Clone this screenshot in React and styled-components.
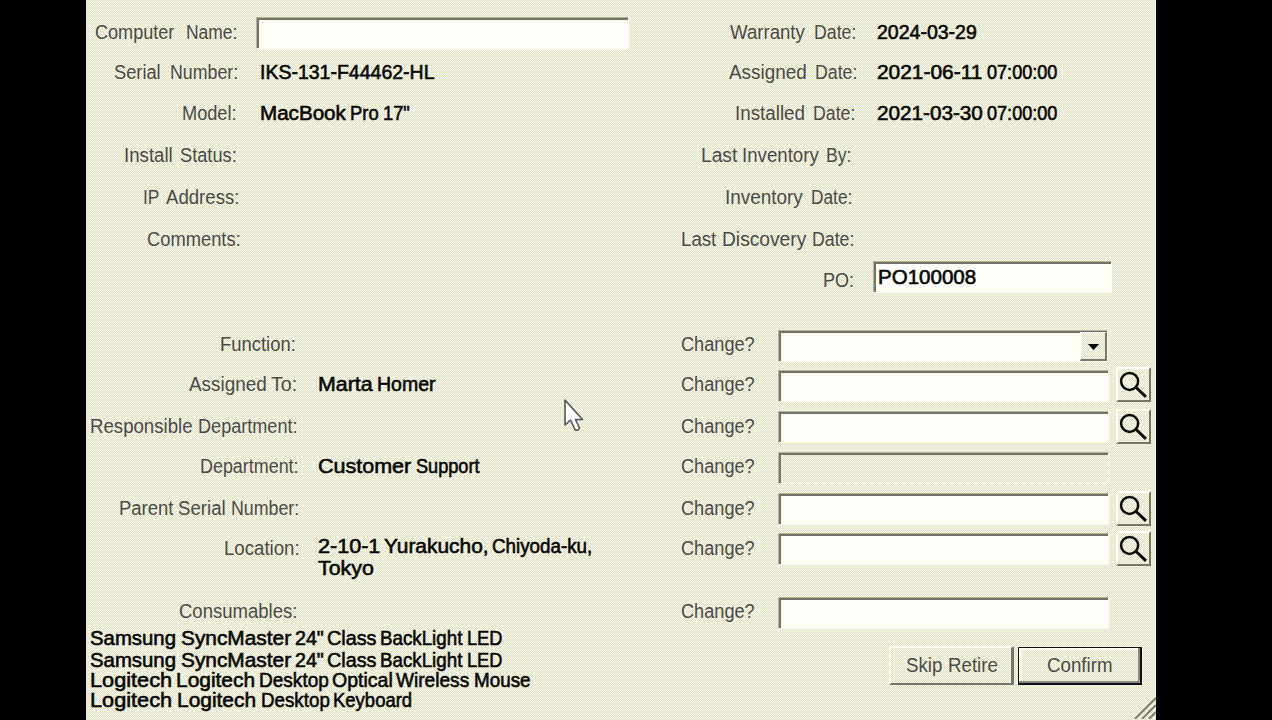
import React, { useLayoutEffect, useRef, useState } from 'react';
import styled, { createGlobalStyle, css } from 'styled-components';

const Global = createGlobalStyle`
  html, body { margin: 0; background: #000; }
  *, *::before, *::after { box-sizing: border-box; }
`;

const dither = css`
  background-color: #f2f2dc;
  background-image:
    conic-gradient(at 1px 1px, transparent 75%, #fff 0),
    conic-gradient(at 1px 1px, transparent 75%, #fff 0),
    conic-gradient(#ffff9c 25%, #dadafc 0 50%, #ffff9c 0 75%, #dadafc 0);
  background-size: 4px 4px, 4px 4px, 2px 2px;
  background-position: 1px 1px, 2px 2px, 1px 0;
  background-attachment: fixed;
`;

const whiteDither = css`
  background-color: #fefefe;
  background-image: conic-gradient(at 1px 1px, transparent 75%, #ffff9c 0);
  background-size: 4px 4px;
  background-position: 3px 1px;
  background-attachment: fixed;
`;

const Screen = styled.div`
  width: 1272px;
  height: 720px;
  padding: 0 116px 0 86px;
  background: #000;
  overflow: hidden;
`;

const Dialog = styled.main`
  ${dither}
  position: relative;
  width: 1070px;
  height: 720px;
  padding-top: 17px;
  overflow: hidden;
  display: flex;
  flex-direction: column;
  font: 20px/20px "Liberation Sans", Arial, sans-serif;
  color: #4a4a48;
`;

const Line = styled.div`
  display: flex;
  flex: none;
  height: ${(p) => p.$h || 20}px;
  white-space: nowrap;
  color: ${(p) => (p.$strong ? '#080808' : 'inherit')};
  -webkit-text-stroke: ${(p) => (p.$strong ? '0.6px #080808' : '0')};
`;

const WordBox = styled.span`
  display: block;
  flex: none;
  width: ${(p) => p.$w + 2}px;
  margin-left: ${(p) => p.$gap - 2}px;
`;

const Glyphs = styled.span`
  display: inline-block;
  transform-origin: 0 50%;
`;

function Word({ text, width, gap }) {
  const ref = useRef(null);
  const [scale, setScale] = useState(1);
  useLayoutEffect(() => {
    setScale((width + 1.5) / ref.current.offsetWidth);
  }, [text, width]);
  return (
    <WordBox $w={width} $gap={gap}>
      <Glyphs ref={ref} style={{ transform: `scaleX(${scale})` }}>{text}</Glyphs>
    </WordBox>
  );
}

// Each word is [text, width, gap before it].
function Text({ words, strong, h }) {
  return (
    <Line $strong={strong} $h={h}>
      {words.map(([text, width, gap], i) => (
        <Word key={i} text={text} width={width} gap={i === 0 ? 1 : gap} />
      ))}
    </Line>
  );
}

const Summary = styled.section`
  display: grid;
  grid-template-columns: 584px 1fr;
  height: 313px;
  flex: none;
`;

const Column = styled.div`
  display: flex;
  flex-direction: column;
`;

const Row = styled.div`
  display: flex;
  align-items: flex-start;
  flex: none;
  height: ${(p) => p.$h}px;
`;

const Label = styled.div`
  display: flex;
  justify-content: flex-end;
  flex: none;
  width: ${(p) => p.$w}px;
  padding: ${(p) => p.$top ?? 5}px ${(p) => p.$inset || 0}px 0 0;
`;

const Value = styled.div`
  flex: none;
  width: ${(p) => (p.$w ? `${p.$w}px` : 'auto')};
  padding: ${(p) => p.$top ?? 5}px 0 0 ${(p) => p.$left || 0}px;
`;

const Field = styled.div`
  ${(p) => (p.$disabled ? '' : whiteDither)}
  flex: none;
  display: flex;
  justify-content: flex-end;
  width: ${(p) => p.$w}px;
  height: 32px;
  margin-left: ${(p) => p.$left || 0}px;
  margin-top: ${(p) => p.$top || 0}px;
  padding: 2px 0 0 2px;
  border: 1px solid;
  border-color: #b4b49a #fbfbe9 #fbfbe9 #b4b49a;
  box-shadow: inset 2px 2px 0 #73736a;
`;

const FieldText = styled.div`
  flex: 1;
  padding: 3px 0 0 3px;
`;

const DropButton = styled.button`
  ${dither}
  width: 27px;
  height: 29px;
  margin: -1px 0 0;
  padding: 2px 0 0;
  border: solid;
  border-width: 1px 2px 2px 1px;
  border-color: #fff #77776a #77776a #fff;
  display: grid;
  place-items: center;
`;

const Finder = styled.button`
  ${dither}
  flex: none;
  width: 35px;
  height: 35px;
  margin: ${(p) => p.$top}px 0 0 7px;
  padding: 0;
  border: solid;
  border-width: 2px;
  border-color: #fffff4 #777768 #777768 #fffff4;
`;

const FinderIcon = styled.svg`
  display: block;
`;

const Changes = styled.section`
  flex: none;
  height: 298px;
`;

const Footer = styled.footer`
  display: flex;
  align-items: flex-start;
  justify-content: space-between;
  padding: 0 14px 0 5px;
`;

const Buttons = styled.div`
  display: flex;
  gap: 4px;
  padding-top: 18px;
`;

const PushButton = styled.button`
  ${dither}
  display: flex;
  justify-content: center;
  align-items: flex-start;
  width: 125px;
  height: 39px;
  padding: 7px 0 0 2px;
  font: inherit;
  color: inherit;
  border: solid;
  border-width: 2px 3px 2px 2px;
  border-color: #fffff2 #777768 #777768 #fffff2;
  ${(p) => p.$primary && css`
    width: 124px;
    height: 38px;
    margin-top: 1px;
    padding: 7px 0 0 2px;
    border-width: 1px 2px 2px 1px;
    border-color: #111;
    box-shadow: inset -2px -2px 0 #85858a, inset 2px 2px 0 #fffff4;
  `}
`;

const Grip = styled.svg`
  position: absolute;
  right: 0;
  bottom: 1px;
`;

const Pointer = styled.svg`
  position: absolute;
  left: 477px;
  top: 398px;
`;

const leftInfo = [
  { h: 40, inset: 3, label: [['Computer', 78], ['Name:', 50, 13]], field: true },
  { h: 41, inset: 2, label: [['Serial', 45], ['Number:', 67, 11]], value: [['IKS-131-F44462-HL', 173]] },
  { h: 42, inset: 4, label: [['Model:', 53]], value: [['MacBook', 84], ['Pro', 27, 6], ['17"', 25, 6]] },
  { h: 42, inset: 4, label: [['Install', 47], ['Status:', 55, 9]] },
  { h: 42, inset: 1, label: [['IP', 15], ['Address:', 72, 8]] },
  { h: 42, inset: 0, label: [['Comments:', 92]] },
];

const rightInfo = [
  { h: 40, inset: 2, label: [['Warranty', 73], ['Date:', 41, 11]], value: [['2024-03-29', 98]] },
  { h: 41, inset: 1, label: [['Assigned', 76], ['Date:', 41, 10]], value: [['2021-06-11', 104], ['07:00:00', 69, 6]] },
  { h: 42, inset: 3, label: [['Installed', 69], ['Date:', 41, 9]], value: [['2021-03-30', 104], ['07:00:00', 69, 6]] },
  { h: 42, inset: 7, label: [['Last', 35], ['Inventory', 75, 6], ['By:', 24, 9]] },
  { h: 42, inset: 6, label: [['Inventory', 76], ['Date:', 40, 10]] },
  { h: 41, inset: 4, label: [['Last', 34], ['Discovery', 83, 7], ['Date:', 41, 7]] },
  { h: 42, inset: 5, label: [['PO:', 29]], field: [['PO100008', 97]] },
];

const changes = [
  { h: 40, top: 4, inset: 4, label: [['Function:', 74]], drop: true },
  { h: 41, top: 4, inset: 2, label: [['Assigned', 76], ['To:', 25, 6]], value: [[['Marta', 53], ['Homer', 57, 6]]], find: -3 },
  { h: 41, top: 5, inset: 2, label: [['Responsible', 101], ['Department:', 98, 7]], find: -2 },
  { h: 41, top: 4, inset: 1, label: [['Department:', 97]], value: [[['Customer', 92], ['Support', 62, 6]]], disabled: true },
  { h: 40, top: 5, inset: 0, label: [['Parent', 53], ['Serial', 46, 6], ['Number:', 67, 7]], find: -2 },
  {
    h: 64, top: 5, inset: 0, label: [['Location:', 74]], find: -2, valueTop: 3,
    value: [[['2-10-1', 61], ['Yurakucho,', 103, 5], ['Chiyoda-ku,', 99, 5]], [['Tokyo', 54]]],
  },
  { h: 31, top: 4, inset: 2, label: [['Consumables:', 117]] },
];

const samsung = [['Samsung', 85], ['SyncMaster', 109, 6], ['24"', 27, 5], ['Class', 48, 5], ['BackLight', 81, 5], ['LED', 34, 6]];
const consumables = [
  { h: 22, words: samsung },
  { h: 20, words: samsung },
  { h: 20, words: [['Logitech', 81], ['Logitech', 78, 5], ['Desktop', 68, 5], ['Optical', 59, 5], ['Wireless', 72, 5], ['Mouse', 55, 6]] },
  { h: 20, words: [['Logitech', 81], ['Logitech', 78, 6], ['Desktop', 67, 6], ['Keyboard', 78, 5]] },
];

function SearchIcon() {
  return (
    <FinderIcon width="31" height="31" viewBox="0 0 31 31" fill="none" stroke="#0b0b0b">
      <circle cx="11.6" cy="12.4" r="8.5" strokeWidth="2.5" />
      <path d="M17.6 18 L28 27.8" strokeWidth="3" />
    </FinderIcon>
  );
}

export default function App() {
  return (
    <Screen>
      <Global />
      <Dialog>
        <Summary>
          <Column>
            {leftInfo.map((r, i) => (
              <Row key={i} $h={r.h}>
                <Label $w={155} $inset={r.inset}><Text words={r.label} /></Label>
                {r.field && <Field $w={373} $left={15} />}
                {r.value && <Value $left={20}><Text strong words={r.value} /></Value>}
              </Row>
            ))}
          </Column>
          <Column>
            {rightInfo.map((r, i) => (
              <Row key={i} $h={r.h}>
                <Label $w={189} $inset={r.inset}><Text words={r.label} /></Label>
                {r.field && (
                  <Field $w={239} $left={14} $top={-4}>
                    <FieldText><Text strong words={r.field} /></FieldText>
                  </Field>
                )}
                {r.value && <Value $left={19}><Text strong words={r.value} /></Value>}
              </Row>
            ))}
          </Column>
        </Summary>
        <Changes>
          {changes.map((r, i) => (
            <Row key={i} $h={r.h}>
              <Label $w={214} $inset={r.inset} $top={r.top}><Text words={r.label} /></Label>
              <Value $w={381} $left={19} $top={r.valueTop ?? r.top}>
                {r.value && r.value.map((words, j) => <Text key={j} strong h={22} words={words} />)}
              </Value>
              <Value $w={97} $left={1} $top={r.top}><Text words={[['Change?', 72]]} /></Value>
              <Field $w={r.drop ? 330 : 331} $disabled={r.disabled}>
                {r.drop && (
                  <DropButton>
                    <svg width="11" height="6" viewBox="0 0 11 6"><path d="M0 0H11L5.5 6Z" fill="#000" /></svg>
                  </DropButton>
                )}
              </Field>
              {r.find && <Finder $top={r.find}><SearchIcon /></Finder>}
            </Row>
          ))}
        </Changes>
        <Footer>
          <div>
            {consumables.map((c, i) => <Text key={i} strong h={c.h} words={c.words} />)}
          </div>
          <Buttons>
            <PushButton><Text words={[['Skip', 35], ['Retire', 48, 7]]} /></PushButton>
            <PushButton $primary><Text words={[['Confirm', 64]]} /></PushButton>
          </Buttons>
        </Footer>
        <Grip width="22" height="22" viewBox="0 0 22 22" fill="none" stroke="#77776b" strokeWidth="1.8">
          <path d="M1 22L22 1M8 22L22 8M15 22L22 15" />
        </Grip>
        <Pointer width="22" height="36" viewBox="0 0 22 36">
          <path d="M2 2V27L7.5 22L12 31.5Q15 33.5 16.5 30L12.5 21.5H19.5Z" fill="#fff" stroke="#55555c" strokeWidth="1.6" strokeLinejoin="round" />
        </Pointer>
      </Dialog>
    </Screen>
  );
}
